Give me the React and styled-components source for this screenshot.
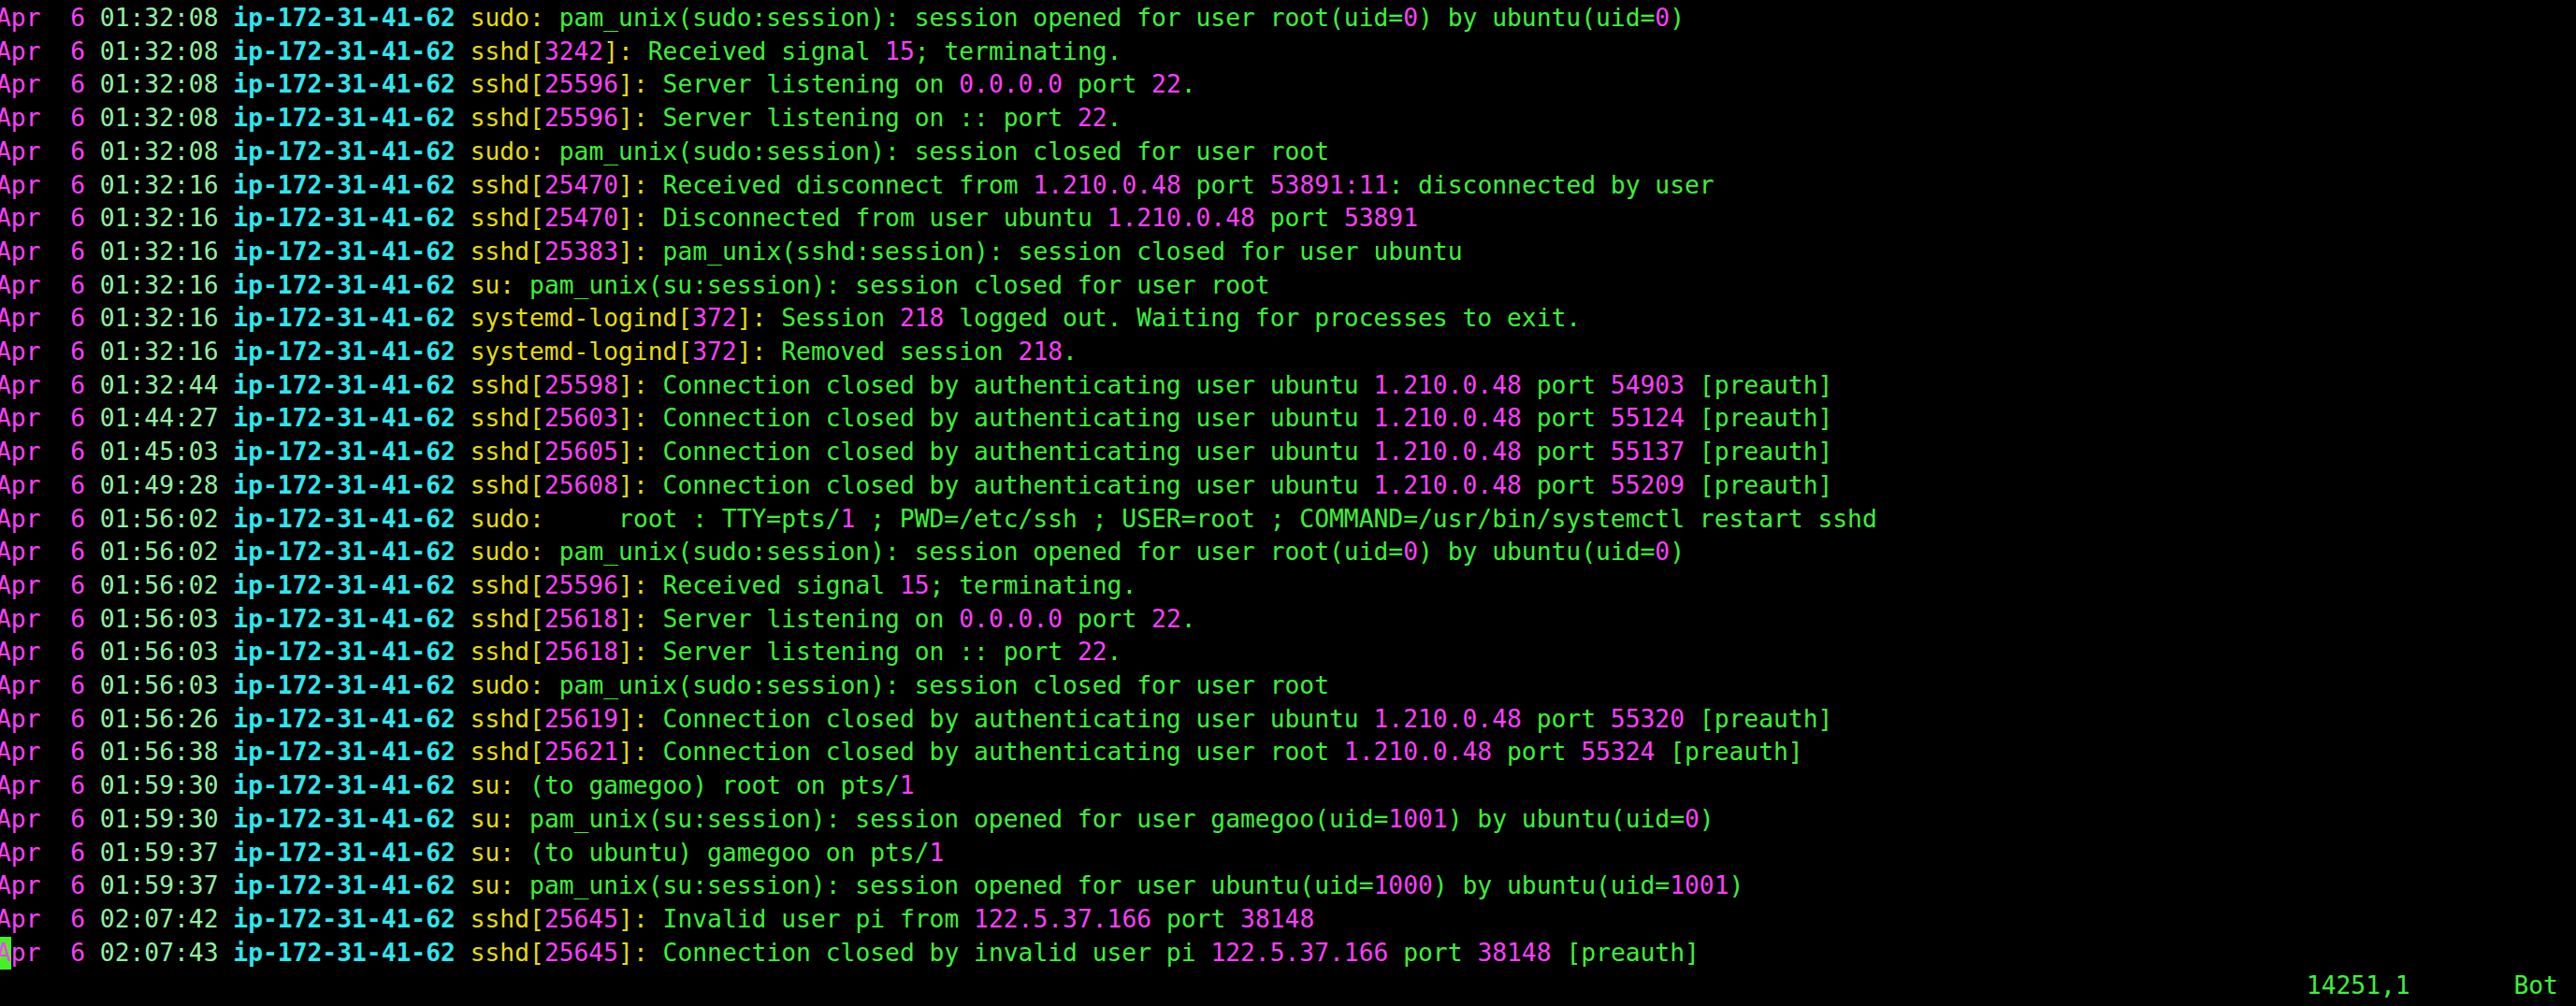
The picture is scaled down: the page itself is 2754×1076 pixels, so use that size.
import React from "react";
import styled, { createGlobalStyle } from "styled-components";

// syslog tail as shown in vim, one entry per row
const entries = [
  ["01:32:08", "sudo", null, "pam_unix(sudo:session): session opened for user root(uid=0) by ubuntu(uid=0)"],
  ["01:32:08", "sshd", "3242", "Received signal 15; terminating."],
  ["01:32:08", "sshd", "25596", "Server listening on 0.0.0.0 port 22."],
  ["01:32:08", "sshd", "25596", "Server listening on :: port 22."],
  ["01:32:08", "sudo", null, "pam_unix(sudo:session): session closed for user root"],
  ["01:32:16", "sshd", "25470", "Received disconnect from 1.210.0.48 port 53891:11: disconnected by user"],
  ["01:32:16", "sshd", "25470", "Disconnected from user ubuntu 1.210.0.48 port 53891"],
  ["01:32:16", "sshd", "25383", "pam_unix(sshd:session): session closed for user ubuntu"],
  ["01:32:16", "su", null, "pam_unix(su:session): session closed for user root"],
  ["01:32:16", "systemd-logind", "372", "Session 218 logged out. Waiting for processes to exit."],
  ["01:32:16", "systemd-logind", "372", "Removed session 218."],
  ["01:32:44", "sshd", "25598", "Connection closed by authenticating user ubuntu 1.210.0.48 port 54903 [preauth]"],
  ["01:44:27", "sshd", "25603", "Connection closed by authenticating user ubuntu 1.210.0.48 port 55124 [preauth]"],
  ["01:45:03", "sshd", "25605", "Connection closed by authenticating user ubuntu 1.210.0.48 port 55137 [preauth]"],
  ["01:49:28", "sshd", "25608", "Connection closed by authenticating user ubuntu 1.210.0.48 port 55209 [preauth]"],
  ["01:56:02", "sudo", null, "    root : TTY=pts/1 ; PWD=/etc/ssh ; USER=root ; COMMAND=/usr/bin/systemctl restart sshd"],
  ["01:56:02", "sudo", null, "pam_unix(sudo:session): session opened for user root(uid=0) by ubuntu(uid=0)"],
  ["01:56:02", "sshd", "25596", "Received signal 15; terminating."],
  ["01:56:03", "sshd", "25618", "Server listening on 0.0.0.0 port 22."],
  ["01:56:03", "sshd", "25618", "Server listening on :: port 22."],
  ["01:56:03", "sudo", null, "pam_unix(sudo:session): session closed for user root"],
  ["01:56:26", "sshd", "25619", "Connection closed by authenticating user ubuntu 1.210.0.48 port 55320 [preauth]"],
  ["01:56:38", "sshd", "25621", "Connection closed by authenticating user root 1.210.0.48 port 55324 [preauth]"],
  ["01:59:30", "su", null, "(to gamegoo) root on pts/1"],
  ["01:59:30", "su", null, "pam_unix(su:session): session opened for user gamegoo(uid=1001) by ubuntu(uid=0)"],
  ["01:59:37", "su", null, "(to ubuntu) gamegoo on pts/1"],
  ["01:59:37", "su", null, "pam_unix(su:session): session opened for user ubuntu(uid=1000) by ubuntu(uid=1001)"],
  ["02:07:42", "sshd", "25645", "Invalid user pi from 122.5.37.166 port 38148"],
  ["02:07:43", "sshd", "25645", "Connection closed by invalid user pi 122.5.37.166 port 38148 [preauth]"],
];

const GlobalStyle = createGlobalStyle`
  html, body {
    margin: 0;
    background: #000;
    overflow: hidden;
  }
`;

const Screen = styled.div`
  height: 100vh;
  box-sizing: border-box;
  padding-top: 2px;
  background: #000;
  overflow: hidden;
  font-family: "DejaVu Sans Mono", "Liberation Mono", monospace;
  font-size: 26.3px;
  line-height: 35.71px;
  color: #3cf23a;
`;

const Row = styled.div`
  height: 35.71px;
  margin-left: -4px;
  white-space: pre;
`;

const Magenta = styled.span`
  color: #fb3ffb;
`;

const Time = styled.span`
  color: #93f0a3;
`;

const Host = styled.span`
  color: #2fe6ee;
  font-weight: bold;
`;

const Prog = styled.span`
  color: #e6dc0c;
`;

const Cursor = styled.span`
  display: inline-block;
  width: 1ch;
  background: #45f028;
  color: #fb3ffb;
`;

const Ruler = styled.div`
  height: 35.71px;
  margin-left: -4px;
  white-space: pre;
  padding-left: 156ch;
`;

const highlight = (text) =>
  text.split(/(\d+(?:[.:]\d+)*)/).map((part, i) =>
    i % 2 === 1 ? <Magenta key={i}>{part}</Magenta> : part
  );

const LogRow = ({ entry, cursor }) => {
  const [time, prog, pid, msg] = entry;
  return (
    <Row>
      {cursor ? (
        <Magenta>
          <Cursor>A</Cursor>pr  6
        </Magenta>
      ) : (
        <Magenta>Apr  6</Magenta>
      )}{" "}
      <Time>{time}</Time> <Host>ip-172-31-41-62</Host>{" "}
      <Prog>
        {prog}
        {pid && (
          <>
            [<Magenta>{pid}</Magenta>]
          </>
        )}
        :
      </Prog>{" "}
      {highlight(msg)}
    </Row>
  );
};

export default function App() {
  return (
    <>
      <GlobalStyle />
      <Screen>
        {entries.map((entry, i) => (
          <LogRow key={i} entry={entry} cursor={i === entries.length - 1} />
        ))}
        <Ruler>{"14251,1       Bot"}</Ruler>
      </Screen>
    </>
  );
}
